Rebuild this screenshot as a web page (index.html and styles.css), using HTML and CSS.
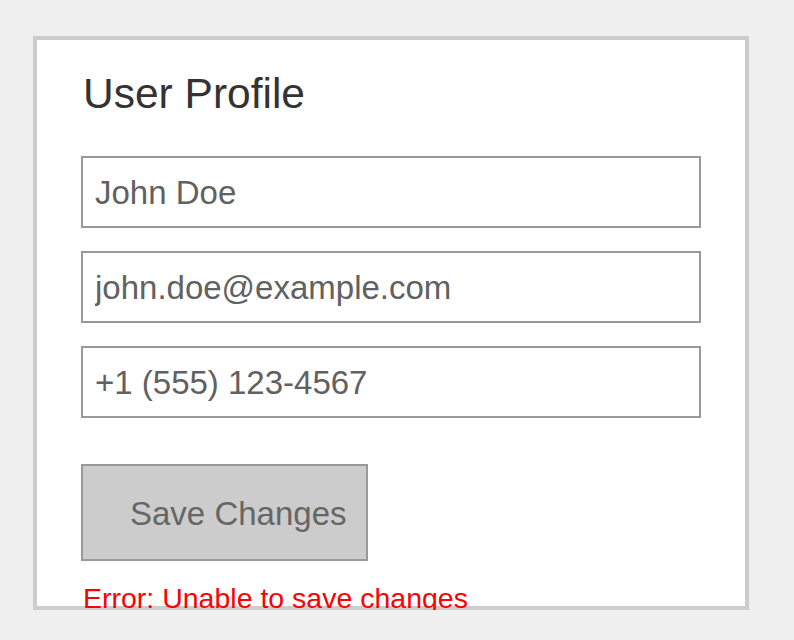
FILE: index.html
```html
<!DOCTYPE html>
<html lang="en">
<head>
<meta charset="utf-8">
<title>User Profile</title>
<link rel="stylesheet" href="styles.css">
</head>
<body>
  <div class="card">
    <h1 class="title">User Profile</h1>
    <form class="form">
      <input class="field" type="text" value="John Doe">
      <input class="field" type="email" value="john.doe@example.com">
      <input class="field" type="tel" value="+1 (555) 123-4567">
      <button class="save" type="button">Save Changes</button>
    </form>
    <p class="error">Error: Unable to save changes</p>
  </div>
</body>
</html>
```

FILE: styles.css
```css
html, body {
  margin: 0;
  padding: 0;
}
body {
  background: #efefef;
  font-family: "Liberation Sans", Arial, sans-serif;
  padding: 36px 0 0 33px;
}
.card {
  box-sizing: border-box;
  width: 716px;
  height: 574px;
  background: #fff;
  border: 4px solid #cccccc;
  padding: 0 44px;
}
.title {
  margin: 29px 0 0 2px;
  font-size: 42.5px;
  line-height: 50px;
  font-weight: normal;
  color: #333;
}
.form {
  margin-top: 37px;
  display: flex;
  flex-direction: column;
  align-items: flex-start;
}
.field {
  box-sizing: border-box;
  width: 620px;
  height: 72px;
  margin: 0 0 23px 0;
  padding: 2px 12px 0 12px;
  border: 2px solid #999;
  border-radius: 0;
  background: #fff;
  font-family: "Liberation Sans", Arial, sans-serif;
  font-size: 33px;
  color: #616161;
  outline: none;
}
.field:last-of-type {
  margin-bottom: 0;
}
.save {
  box-sizing: border-box;
  margin-top: 46px;
  width: 287px;
  height: 97px;
  padding: 2px 19px 0 47px;
  border: 2px solid #999;
  border-radius: 0;
  background: #cccccc;
  font-family: "Liberation Sans", Arial, sans-serif;
  font-size: 33px;
  color: #666;
  text-align: left;
  white-space: nowrap;
}
.error {
  margin: 21px 0 0 2px;
  font-size: 28.5px;
  line-height: 32px;
  color: #ff0000;
  white-space: nowrap;
}
```
